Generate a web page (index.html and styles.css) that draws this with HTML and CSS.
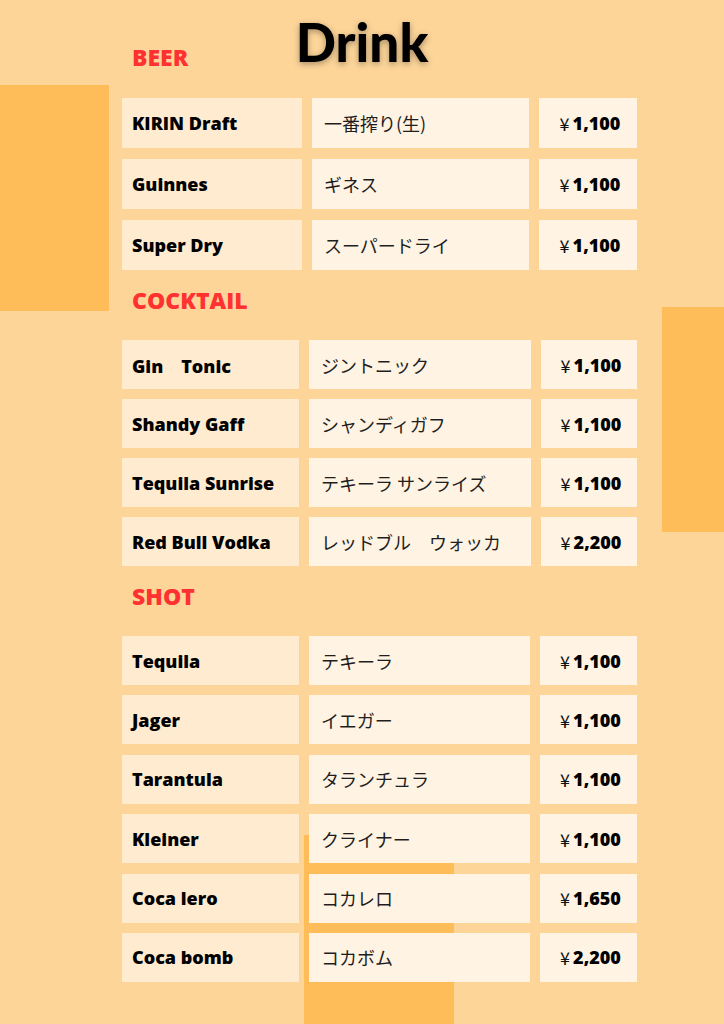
FILE: index.html
```html
<!DOCTYPE html>
<html lang="ja">
<head>
<meta charset="utf-8">
<title>Drink</title>
<link rel="stylesheet" href="styles.css">
</head>
<body>
<div class="page">
  <div class="deco deco-left"></div>
  <div class="deco deco-right"></div>
  <div class="deco deco-bottom"></div>

  <main class="menu">
    <header class="top">
      <h2 class="section-title">BEER</h2>
      <h1 class="title">Drink</h1>
      <span></span>
    </header>

    <section class="list list-beer">
      <div class="row"><div class="cell name">KIRIN Draft</div><div class="cell jp">一番搾り(生)</div><div class="cell price"><span class="yen">¥</span>1,100</div></div>
      <div class="row"><div class="cell name">Guinnes</div><div class="cell jp">ギネス</div><div class="cell price"><span class="yen">¥</span>1,100</div></div>
      <div class="row"><div class="cell name">Super Dry</div><div class="cell jp">スーパードライ</div><div class="cell price"><span class="yen">¥</span>1,100</div></div>
    </section>

    <h2 class="section-title section-gap">COCKTAIL</h2>
    <section class="list list-cocktail">
      <div class="row"><div class="cell name">Gin　Tonic</div><div class="cell jp">ジントニック</div><div class="cell price"><span class="yen">¥</span>1,100</div></div>
      <div class="row"><div class="cell name">Shandy Gaff</div><div class="cell jp">シャンディガフ</div><div class="cell price"><span class="yen">¥</span>1,100</div></div>
      <div class="row"><div class="cell name">Tequila Sunrise</div><div class="cell jp">テキーラ サンライズ</div><div class="cell price"><span class="yen">¥</span>1,100</div></div>
      <div class="row"><div class="cell name">Red Bull Vodka</div><div class="cell jp">レッドブル　ウォッカ</div><div class="cell price"><span class="yen">¥</span>2,200</div></div>
    </section>

    <h2 class="section-title section-gap">SHOT</h2>
    <section class="list list-shot">
      <div class="row"><div class="cell name">Tequila</div><div class="cell jp">テキーラ</div><div class="cell price"><span class="yen">¥</span>1,100</div></div>
      <div class="row"><div class="cell name">Jager</div><div class="cell jp">イエガー</div><div class="cell price"><span class="yen">¥</span>1,100</div></div>
      <div class="row"><div class="cell name">Tarantula</div><div class="cell jp">タランチュラ</div><div class="cell price"><span class="yen">¥</span>1,100</div></div>
      <div class="row"><div class="cell name">Kleiner</div><div class="cell jp">クライナー</div><div class="cell price"><span class="yen">¥</span>1,100</div></div>
      <div class="row"><div class="cell name">Coca lero</div><div class="cell jp">コカレロ</div><div class="cell price"><span class="yen">¥</span>1,650</div></div>
      <div class="row"><div class="cell name">Coca bomb</div><div class="cell jp">コカボム</div><div class="cell price"><span class="yen">¥</span>2,200</div></div>
    </section>
  </main>
</div>
</body>
</html>
```

FILE: styles.css
```css
* { box-sizing: border-box; }

html, body {
  margin: 0;
  padding: 0;
  background: #fdd599;
}

.page {
  position: relative;
  width: 724px;
  height: 1024px;
  overflow: hidden;
  background: #fdd599;
  font-family: "Open Sans", "Noto Sans CJK JP", sans-serif;
}

.deco {
  position: absolute;
  background: #ffbd59;
  z-index: 0;
}
.deco-left { left: 0; top: 85px; width: 109px; height: 226px; }
.deco-right { left: 662px; top: 307px; width: 62px; height: 225px; }
.deco-bottom { left: 304px; top: 835px; width: 150px; height: 189px; }

.menu {
  position: relative;
  z-index: 1;
  padding-left: 122px;
  width: 637px;
}

.top {
  display: grid;
  grid-template-columns: 1fr auto 1fr;
  align-items: end;
  margin-left: -122px;
  width: 724px;
  padding-top: 12px;
}
.top .section-title { padding-left: 132px; }

.title {
  margin: 0;
  font-family: "Lato", "Open Sans", sans-serif;
  font-weight: 900;
  font-size: 53px;
  line-height: 60px;
  color: #000;
  text-shadow: 0 2px 6px rgba(0, 0, 0, 0.35);
  letter-spacing: 0;
}

.section-title {
  margin: 0;
  padding-left: 10px;
  font-family: "Open Sans", sans-serif;
  font-weight: 800;
  font-size: 23px;
  line-height: 30px;
  color: #ff3131;
}
.section-gap { margin-top: 15px; }

.list {
  display: flex;
  flex-direction: column;
  margin-top: 25px;
}
.list-beer { margin-top: 26px; gap: 11px; }
.list-cocktail { gap: 10px; }
.list-shot { gap: 10.4px; }

.row {
  display: grid;
  column-gap: 10px;
  height: 49px;
}
.list-beer .row { grid-template-columns: 180px 217px 98px; height: 50px; }
.list-cocktail .row { grid-template-columns: 177px 222px 96px; }
.list-shot .row { grid-template-columns: 177px 221px 97px; }

.cell {
  display: flex;
  align-items: center;
  white-space: pre;
}

.name {
  background: #feebd0;
  padding-left: 10px;
  font-family: "Open Sans", "Noto Sans CJK JP", sans-serif;
  font-weight: 800;
  font-size: 18px;
  color: #000;
}

.jp {
  background: #fff3e3;
  padding-left: 12px;
  font-family: "Noto Sans CJK JP", sans-serif;
  font-weight: 400;
  font-size: 18px;
  color: #1e1e1e;
}

.price {
  background: #fff3e3;
  justify-content: center;
  padding-left: 4px;
  font-family: "Open Sans", sans-serif;
  font-weight: 800;
  font-size: 18px;
  color: #000;
}
.yen {
  font-family: "Noto Sans CJK JP", sans-serif;
  font-weight: 400;
  margin-right: 3px;
  color: #111;
}
```
